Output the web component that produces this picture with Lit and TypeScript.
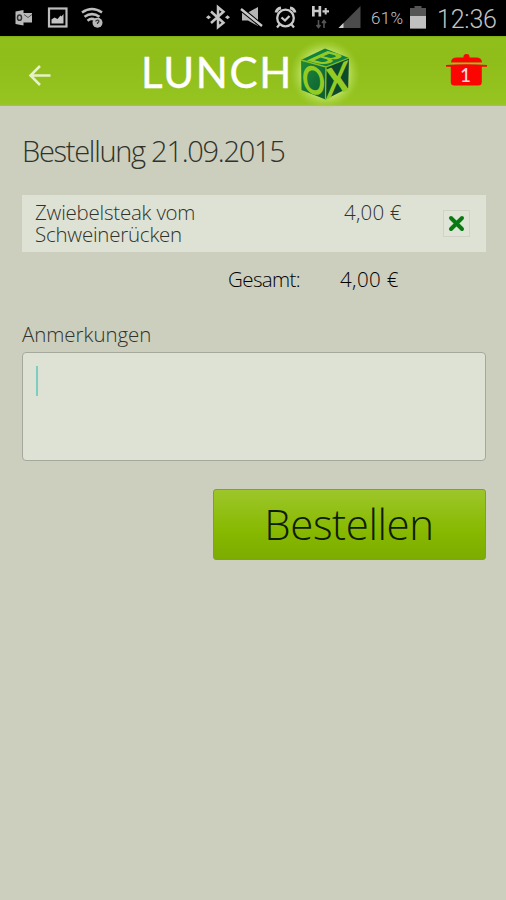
import { LitElement, html, css, svg } from "lit";
import { customElement, property, state } from "lit/decorators.js";

interface Item {
  name: string;
  price: string;
}

@customElement("status-bar")
class StatusBar extends LitElement {
  static styles = css`
    :host {
      display: flex;
      align-items: center;
      height: 36px;
      background: #000;
      color: #c4c4c4;
      font-family: Roboto, sans-serif;
      box-sizing: border-box;
      width: 506px;
    }
    svg {
      display: block;
      flex: none;
    }
    .percent {
      width: 36px;
      margin-left: 10px;
      font-size: 17px;
      letter-spacing: 0.300px;
      white-space: nowrap;
    }
    .battery {
      margin-left: 3px;
    }
    .time {
      margin-left: 11px;
      padding-top: 2px;
      font-size: 25px;
      letter-spacing: -0.2px;
      white-space: nowrap;
    }
  `;

  render() {
    return html`
      <svg width="361" height="36" viewBox="0 0 361 36">
        <g fill="#b9b9b9">
          <path d="M15.500 11.500l8-1.500v15.500l-8-1.500z" />
          <path d="M23 13h9v9.500h-9z" />
          <path d="M24 14.500l4 3 4-3" fill="none" stroke="#555" />
          <ellipse cx="19.500" cy="17.700" rx="2" ry="2.600" fill="none" stroke="#333" stroke-width="1.500" />
        </g>
        <rect x="49" y="8.500" width="17.500" height="18" fill="none" stroke="#bdbdbd" stroke-width="2.200" />
        <path d="M51.500 23.500v-4l3-2 3 1.500 3-3.500 1 1 2-2.500v9.500z" fill="#c4c4c4" />
        <g fill="none" stroke="#bdbdbd" stroke-width="2.600">
          <path d="M82 12.500q10-7 20 0" />
          <path d="M84.500 16.800q7.500-5.300 15 0" />
          <path d="M87.500 20.700q4-3.200 7.500-.7" />
        </g>
        <circle cx="97.500" cy="22.700" r="5" fill="#b9b9b9" />
        <path d="M95.500 21.300q2-2.300 3.500-.3 0 1.300-1.500 2v1" fill="none" stroke="#333" stroke-width="1.200" />
        <path d="M211 11.500l12.500 11.200-5.500 4.500V7.200l5.500 4.600L211 23" fill="none" stroke="#c4c4c4" stroke-width="2.500" />
        <path d="M206 17.300l2.500-2 2.500 2-2.500 2zM225 17.300l2.500-2 2.500 2-2.500 2z" fill="#c4c4c4" />
        <path d="M242 12.500h6l10-5.500v19l-10-5.500h-6z" fill="#b5b5b5" />
        <path d="M241 9l21 17" stroke="#000" stroke-width="4.500" />
        <path d="M241 9l21 17" stroke="#c9c9c9" stroke-width="2.400" />
        <g fill="none" stroke="#c9c9c9" stroke-width="2.300">
          <circle cx="285.500" cy="18" r="8.300" />
          <path d="M281.500 17.500l3.500 3 4.500-4.500M279.500 24.500l-2.500 3M291.500 24.500l2.500 3" />
          <path d="M276 12.500q1-4 5-4.500M295 12.500q-1-4-5-4.500" stroke-width="3" />
        </g>
        <path d="M312 6h2.700v3.800h3.800V6h2.700v10.500h-2.700v-4.200h-3.800v4.200H312zM322.500 10.200h2.200V8h2v2.200h2.300v2.200h-2.300v2.200h-2v-2.200h-2.200z" fill="#c9c9c9" />
        <path d="M318.500 20v7m-2-2l2 2.500 2-2.500M324 28v-7m-2 2l2-2.500 2 2.500" fill="none" stroke="#555" stroke-width="1.600" />
        <path d="M338.500 28L360.500 6v22z" fill="#4b4b4b" />
        <path d="M338.500 28l5-5v5z" fill="#d0d0d0" />
      </svg>
      <span class="percent">61%</span>
      <svg class="battery" width="16" height="36" viewBox="0 0 16 36">
        <path d="M0 8h4.500V6h7v2H16v20.500H0z" fill="#555" />
        <path d="M0 16h16v12.500H0z" fill="#c0c0c0" />
      </svg>
      <span class="time">12:36</span>
    `;
  }
}

@customElement("app-header")
class AppHeader extends LitElement {
  @property({ type: Number }) count = 0;

  static styles = css`
    :host {
      display: flex;
      align-items: center;
      height: 70px;
      background: linear-gradient(#7eae10 0, #8fbf1a 2px, #8fbe1b 25px, #96c421 68px, #a6bf69 70px);
      box-sizing: border-box;
    }
    svg {
      display: block;
      flex: none;
      overflow: visible;
    }
    .back {
      margin: 7px 0 0 28px;
    }
    .word {
      margin-left: 89px;
      width: 156px;
      padding-top: 2px;
      color: #fff;
      font: 400 42px/60px Lato, sans-serif;
      -webkit-text-stroke: 0.400px #fff;
      letter-spacing: 1.700px;
      white-space: nowrap;
    }
    .box {
      margin-left: -9px;
    }
    .pot {
      margin-left: 82px;
    }
    .face {
      font-family: Lato, sans-serif;
      font-weight: 700;
      fill: #93cb24;
    }
    .count {
      font: 500 19px Lato, sans-serif;
      fill: #ffd9d9;
    }
  `;

  render() {
    return html`
      <svg class="back" width="24" height="24" viewBox="0 0 24 24">
        <path d="M22.500 12.500H3M12 3L2.500 12.500l9.500 9.500" fill="none" stroke="#e5f3c4" stroke-width="2.500" />
      </svg>
      <span class="word">LUNCH</span>
      <svg class="box" width="74" height="70" viewBox="288 36 74 70">
        <defs>
          <radialGradient id="glow">
            <stop offset="0.550" stop-color="#d4ef8c" />
            <stop offset="1" stop-color="#a9d63c" stop-opacity="0" />
          </radialGradient>
          <linearGradient id="side" x2="1" y2="1">
            <stop offset="0" stop-color="#1d8a3c" />
            <stop offset="1" stop-color="#0c5a30" />
          </linearGradient>
        </defs>
        <circle cx="325" cy="74" r="35" fill="url(#glow)" />
        <path d="M301 60l24-11.500L349 58l-23 9z" fill="#128040" />
        <path d="M301 60l25 7-.5 32.500L301.500 90z" fill="url(#side)" />
        <path d="M326 67l23-9-.8 30-22.700 11.500z" fill="#0b4a2c" />
        <path d="M301 60l25 7 23-9M326 67l-.5 32" fill="none" stroke="#86c023" stroke-width="1.300" />
        ${svg`
          <text class="face" font-size="34" transform="matrix(.84 .26 0 1.120 302 90.500)">O</text>
          <text class="face" font-size="34" transform="matrix(1.020 -.45 0 1.220 325.500 100)">X</text>
          <text class="face" font-size="25" transform="matrix(1.350 .36 -1.150 .520 304 59.700)">B</text>
        `}
      </svg>
      <svg class="pot" width="44" height="70" viewBox="444 36 44 70">
        <g fill="#fb0503">
          <path d="M451 62.500q0-5 6-5h6.500q-.5-3.500 3-3.500t3 3.500h6.500q6 0 6 5z" />
          <path d="M446 65q10-.8 20.500-.8T487 65v1.800h-5.200V82q0 3.500-3.500 3.500h-24q-3.500 0-3.500-3.500V66.800H446z" />
        </g>
        <path d="M451 63.300h31" stroke="#d2a916" stroke-width=".8" />
        <text class="count" x="460" y="82">${this.count}</text>
      </svg>
    `;
  }
}

@customElement("app-root")
class AppRoot extends LitElement {
  @state() private items: Item[] = [{ name: "Zwiebelsteak vom Schweinerücken", price: "4,00 €" }];

  static styles = css`
    :host {
      display: flex;
      flex-direction: column;
      width: 506px;
      height: 900px;
      overflow: hidden;
      background: #cccebe;
      color: #30332c;
      font-family: "Open Sans", sans-serif;
      font-weight: 300;
    }
    main {
      display: flex;
      flex-direction: column;
      padding: 0 20px 0 22px;
    }
    h1 {
      margin: 25px 0 0;
      font-size: 29px;
      line-height: 40px;
      height: 40px;
      font-weight: 300;
      letter-spacing: -1.280px;
      white-space: nowrap;
    }
    .item {
      display: flex;
      height: 57px;
      margin-top: 24px;
      padding: 6px 16px 0 13px;
      box-sizing: border-box;
      background: #dee2d4;
      font-size: 20.500px;
      line-height: 22px;
      letter-spacing: -0.230px;
    }
    .name {
      width: 200px;
    }
    .price {
      width: 62px;
      margin-left: 109px;
      letter-spacing: 0.200px;
      white-space: nowrap;
    }
    .remove {
      display: flex;
      align-items: center;
      justify-content: center;
      width: 27px;
      height: 27px;
      margin: 9px 0 0 auto;
      padding: 0;
      box-sizing: border-box;
      border: 1px solid #cfd2c6;
      background: #e0e4d7;
    }
    .total {
      display: flex;
      height: 28px;
      margin-top: 13px;
      padding-left: 206px;
      color: #000;
      font-size: 20.500px;
      line-height: 28px;
      letter-spacing: -0.600px;
      white-space: nowrap;
    }
    .sum {
      width: 112px;
    }
    .amount {
      letter-spacing: 0.400px;
    }
    .label {
      margin-top: 27px;
      height: 28px;
      font-size: 20.500px;
      line-height: 28px;
      letter-spacing: -0.050px;
    }
    .notes {
      height: 109px;
      margin-top: 4px;
      padding: 13px 13px;
      box-sizing: border-box;
      border: 1.500px solid #a5a89d;
      border-radius: 4px;
      background: #dee2d4;
    }
    .caret {
      width: 2px;
      height: 30px;
      background: #7fcdbf;
    }
    .submit {
      align-self: flex-end;
      width: 273px;
      height: 71px;
      margin: 28px 0 0;
      padding: 0 1px 2px 0;
      border: 1px solid #7e9e3a;
      border-radius: 3px;
      background: linear-gradient(#9dc62a, #87b900 60%, #7bac00);
      color: #0e1c00;
      font: 300 42px/66px "Open Sans", sans-serif;
      letter-spacing: -0.400px;
    }
  `;

  render() {
    return html`
      <status-bar></status-bar>
      <app-header .count=${this.items.length}></app-header>
      <main>
        <h1>Bestellung 21.09.2015</h1>
        ${this.items.map(
          (item) => html`
            <div class="item">
              <span class="name">${item.name}</span>
              <span class="price">${item.price}</span>
              <button class="remove">
                <svg width="17" height="17" viewBox="0 0 17 17">
                  <path d="M3 3l11 11M14 3L3 14" stroke="#077a10" stroke-width="4" stroke-linecap="round" />
                </svg>
              </button>
            </div>
          `
        )}
        <div class="total"><span class="sum">Gesamt:</span><span class="amount">4,00 €</span></div>
        <div class="label">Anmerkungen</div>
        <div class="notes"><div class="caret"></div></div>
        <button class="submit">Bestellen</button>
      </main>
    `;
  }
}
